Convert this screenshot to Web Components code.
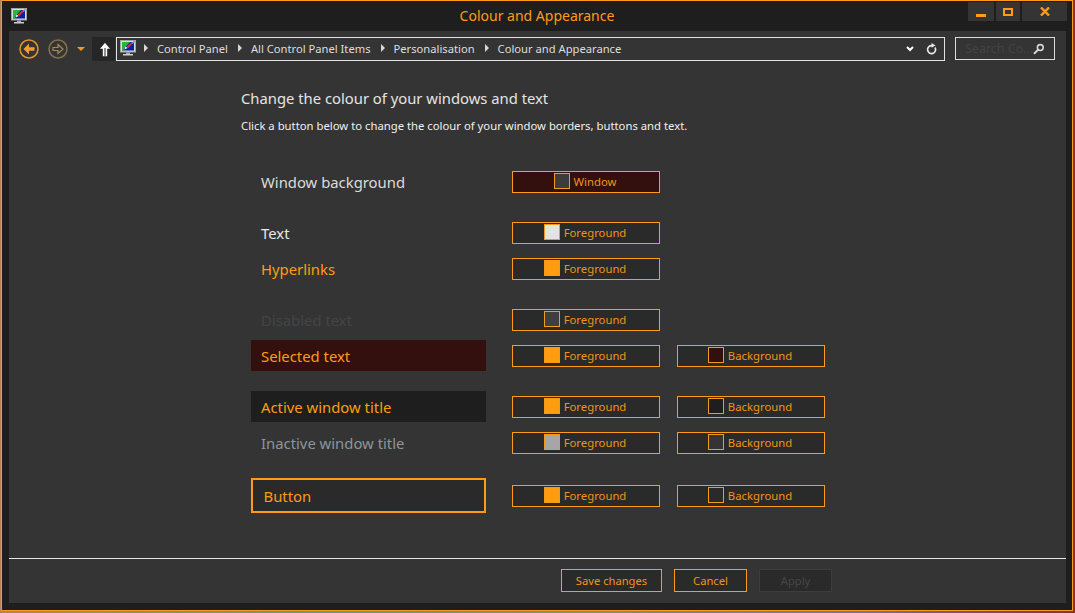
<!DOCTYPE html>
<html lang="en">
<head>
<meta charset="utf-8">
<title>Colour and Appearance</title>
<style>
  html, body { margin: 0; height: 100%; background: #7d2a3a; overflow: hidden; }
  body { font-family: "Noto Sans", "Open Sans", sans-serif; }
</style>
</head>
<body>
<cp-window>
  <cp-titlebar slot="title" caption="Colour and Appearance"></cp-titlebar>
  <cp-toolbar slot="toolbar"></cp-toolbar>
  <cp-heading heading="Change the colour of your windows and text"
    sub="Click a button below to change the colour of your window borders, buttons and text."></cp-heading>
  <appearance-list>
    <appearance-row label="Window background" kind="plain" fg="window"></appearance-row>
    <appearance-row class="gap" label="Text" fg="#e3e3e3" tint="#e8e8e8"></appearance-row>
    <appearance-row label="Hyperlinks" fg="#ff9c10" tint="#ff9c10"></appearance-row>
    <appearance-row class="gap" label="Disabled text" fg="#3f3f3f" tint="#424547"></appearance-row>
    <appearance-row label="Selected text" fg="#ff9c10" bg="#33100e" tint="#ff9c10" band="#33100e"></appearance-row>
    <appearance-row class="gap" label="Active window title" fg="#ff9c10" bg="#1e1e1e" tint="#ff9c10" band="#1e1e1e"></appearance-row>
    <appearance-row label="Inactive window title" fg="#a6a6a6" bg="#343434" tint="#8d949b"></appearance-row>
    <appearance-row class="gap" label="Button" fg="#ff9c10" bg="#2a2a2a" tint="#ff9c10" band="#2a2a2a" boxed></appearance-row>
  </appearance-list>
  <cp-footer slot="footer">
    <dlg-button style="width:101px">Save changes</dlg-button>
    <dlg-button style="width:73px">Cancel</dlg-button>
    <dlg-button style="width:73px" disabled>Apply</dlg-button>
  </cp-footer>
</cp-window>

<script>
const MONITOR = `
  <svg width="16" height="16" viewBox="0 0 16 16" aria-hidden="true">
    <rect x=".5" y=".5" width="15" height="11.5" fill="#dcdcdc" stroke="#a2a2a2"/>
    <rect x="2" y="2" width="12" height="8.5" fill="#0a1ea8"/>
    <path d="M2 2h8L5 7.5 3.5 10.5H2z" fill="#2bb53a"/>
    <path d="M4.5 9.5l1-3 2 1.5z" fill="#fff"/>
    <path d="M6.5 6.5L12 2l1 1-5 5.5z" fill="#d8312c"/>
    <path d="M11.5 3L14 .8l1 1-2.5 2.5z" fill="#5a8fe0"/>
    <rect x="6" y="12.5" width="4" height="1.5" fill="#a9a9a9"/>
    <rect x="3" y="14" width="10" height="1.5" fill="#cfcfcf"/>
  </svg>`;

class CpWindow extends HTMLElement {
  constructor() {
    super();
    this.attachShadow({ mode: 'open' }).innerHTML = `
      <style>
        :host { display: block; width: 1075px; height: 613px; box-sizing: border-box; padding: 0 2px 2px 1px;
          background: linear-gradient(90deg, #b9834f, #5d9a86 30%, #8a8a70 55%, #7a6fae 80%, #8a2c3e); }
        .frame { height: 100%; box-sizing: border-box; border: 1px solid #ff9a1a; background: #1e1e1e;
          display: flex; flex-direction: column; }
        .client { flex: 1; margin: 0 6px 7px 7px; background: #343434; display: flex; flex-direction: column; min-height: 0; }
        .body { flex: 1; min-height: 0; padding: 0 0 0 232px; }
      </style>
      <div class="frame">
        <slot name="title"></slot>
        <div class="client">
          <slot name="toolbar"></slot>
          <div class="body"><slot></slot></div>
          <slot name="footer"></slot>
        </div>
      </div>`;
  }
}

class CpTitlebar extends HTMLElement {
  constructor() {
    super();
    this.attachShadow({ mode: 'open' }).innerHTML = `
      <style>
        :host { display: flex; height: 30px; position: relative; color: #ff9a1a; }
        .icon { margin: 6px 0 0 9px; height: 16px; }
        .cap { position: absolute; left: 0; right: 0; top: 5px; text-align: center; font-size: 14px; line-height: 20px; }
        .ctl { margin-left: auto; margin-right: 5px; display: flex; gap: 2px; height: 19px; margin-top: 1px; position: relative; }
        .ctl span { background: #343434; display: flex; align-items: center; justify-content: center; }
        .ctl svg { display: block; }
      </style>
      <div class="icon">${MONITOR}</div>
      <div class="cap">${this.getAttribute('caption')}</div>
      <div class="ctl">
        <span style="width:26px"><svg width="10" height="3" style="margin-top:7px"><rect width="10" height="3" fill="#ff9a1a"/></svg></span>
        <span style="width:24px"><svg width="10" height="8"><rect x="1" y="1" width="8" height="6" fill="none" stroke="#ff9a1a" stroke-width="2"/></svg></span>
        <span style="width:45px"><svg width="10" height="9"><path d="M1 .5l8 8M9 .5l-8 8" stroke="#ff9a1a" stroke-width="2.4"/></svg></span>
      </div>`;
  }
}

class CpToolbar extends HTMLElement {
  constructor() {
    super();
    const crumbs = ['Control Panel', 'All Control Panel Items', 'Personalisation', 'Colour and Appearance'];
    this.attachShadow({ mode: 'open' }).innerHTML = `
      <style>
        :host { display: flex; align-items: flex-start; padding: 6px 0 0 10px; height: 30px; box-sizing: border-box; flex: none; }
        svg { display: block; }
        .nav { display: flex; align-items: center; height: 24px; gap: 9px; }
        .up { width: 23px; height: 24px; box-sizing: border-box; padding-left: 2px; margin-left: 7px; margin-right: 1px; background: #262626; display: flex; align-items: center; justify-content: center; }
        .addr { width: 829px; height: 24px; box-sizing: border-box; border: 1px solid #e2e2e2; display: flex; align-items: center; padding: 0 0 2px 3px; color: #dedede; font-size: 11.2px; }
        .addr .mon { margin-right: 8px; }
        .crumb { display: flex; align-items: center; }
        .crumb i { width: 0; height: 0; border-left: 4px solid #d8d8d8; border-top: 4px solid transparent; border-bottom: 4px solid transparent; margin-right: 9px; }
        .crumb + .crumb { margin-left: 10px; }
        .tail { margin-left: auto; margin-top: 2px; display: flex; align-items: center; gap: 12px; padding-right: 7px; }
        .search { width: 100px; height: 23px; box-sizing: border-box; border: 1px solid #dcdcdc; margin-left: 10px; display: flex; align-items: center; padding: 0 9px 0 9px; font-size: 12.5px; color: #434343; justify-content: space-between; white-space: nowrap; }
      </style>
      <div class="nav">
        <svg width="20" height="20" viewBox="0 0 20 20"><circle cx="10" cy="10" r="9" fill="none" stroke="#e0962a" stroke-width="1.5"/><path d="M10 4.5L4.5 10l5.5 5.5v-3.7h5.5V8.2H10z" fill="#f0a030"/></svg>
        <svg width="20" height="20" viewBox="0 0 20 20"><circle cx="10" cy="10" r="9" fill="none" stroke="#85714f" stroke-width="1.5"/><path d="M10 5.5L15 10l-5 4.5v-3H5v-3h5z" fill="none" stroke="#a88a55" stroke-width="1.2"/></svg>
        <svg width="8" height="4" viewBox="0 0 8 4"><path d="M0 0h8L4 4z" fill="#f09a20"/></svg>
      </div>
      <div class="up">
        <svg width="12" height="15" viewBox="0 0 12 15"><path d="M6 .5L11.5 7H8.5v7.5h-5V7H.5z" fill="#fff" stroke="#111" stroke-width=".5"/><path d="M6 6v8" stroke="#777" stroke-width="1.6"/></svg>
      </div>
      <div class="addr">
        <div class="mon">${MONITOR}</div>
        ${crumbs.map(c => `<span class="crumb"><i></i>${c}</span>`).join('')}
        <div class="tail">
          <svg width="8" height="6" viewBox="0 0 8 6"><path d="M1 1l3 3 3-3" fill="none" stroke="#fff" stroke-width="2"/></svg>
          <svg width="11" height="12" viewBox="0 0 11 12"><path d="M9 4.5A4 4 0 1 1 6 2.6" fill="none" stroke="#e8e8e8" stroke-width="1.7"/><path d="M5.5 0l4 2.6-4 2.2z" fill="#e8e8e8"/></svg>
        </div>
      </div>
      <div class="search">
        <span>Search Co...</span>
        <svg width="12" height="12" viewBox="0 0 12 12"><circle cx="7.5" cy="4.5" r="3" fill="none" stroke="#d8d8d8" stroke-width="1.6"/><path d="M5.2 6.8L1 11" stroke="#d8d8d8" stroke-width="2"/></svg>
      </div>`;
  }
}

class CpHeading extends HTMLElement {
  constructor() {
    super();
    this.attachShadow({ mode: 'open' }).innerHTML = `
      <style>
        :host { display: block; padding-top: 27px; color: #e4e4e4; }
        h1 { margin: 0; font-size: 14.8px; font-weight: 400; line-height: 20px; }
        p { margin: 10px 0 0; font-size: 11.3px; line-height: 16px; color: #f0f0f0; }
      </style>
      <h1>${this.getAttribute('heading')}</h1>
      <p>${this.getAttribute('sub')}</p>`;
  }
}

class AppearanceList extends HTMLElement {
  constructor() {
    super();
    this.attachShadow({ mode: 'open' }).innerHTML = `
      <style>:host { display: flex; flex-direction: column; gap: 5px; padding: 32px 0 0 10px; }</style>
      <slot></slot>`;
  }
}

class AppearanceRow extends HTMLElement {
  constructor() {
    super();
    const fg = this.getAttribute('fg'), bg = this.getAttribute('bg');
    const band = this.getAttribute('band') || 'transparent';
    const boxed = this.hasAttribute('boxed');
    const main = fg === 'window'
      ? `<color-button swatch="#3c3c3c" fill="#33100e">Window</color-button>`
      : `<color-button swatch="${fg}">Foreground</color-button>`;
    this.attachShadow({ mode: 'open' }).innerHTML = `
      <style>
        :host { display: flex; align-items: center; height: ${boxed ? 35 : 31}px; }
        :host(.gap) { margin-top: 15px; }
        .label { width: 235px; height: 100%; box-sizing: border-box; background: ${band};
          ${boxed ? 'border: 2px solid #ff9a1a; padding-left: 10.5px;' : 'padding-left: 10px;'}
          display: flex; align-items: center; font-size: 14.85px; color: ${this.getAttribute('tint') || '#dcdcdc'}; }
        .btns { display: flex; gap: 17px; margin-left: 26px; }
      </style>
      <div class="label">${this.getAttribute('label')}</div>
      <div class="btns">
        ${main}
        ${bg ? `<color-button swatch="${bg}">Background</color-button>` : ''}
      </div>`;
  }
}

class ColorButton extends HTMLElement {
  constructor() {
    super();
    const swatch = this.getAttribute('swatch');
    this.attachShadow({ mode: 'open' }).innerHTML = `
      <style>
        :host { display: flex; width: 148px; height: 22px; box-sizing: border-box; border: 1px solid #ff9a1a;
          background: ${this.getAttribute('fill') || '#2a2a2a'}; align-items: center; justify-content: center; gap: 4px;
          font-size: 11.3px; color: #f09418; padding-right: 2px; }
        i { width: 16px; height: 16px; margin-bottom: 2px; box-sizing: border-box; border: 1px solid #f09a20; background: ${swatch}; }
      </style>
      <i></i><span><slot></slot></span>`;
  }
}

class CpFooter extends HTMLElement {
  constructor() {
    super();
    this.attachShadow({ mode: 'open' }).innerHTML = `
      <style>
        :host { display: flex; flex: none; height: 45px; box-sizing: border-box; border-top: 1px solid #e6e6e6;
          padding: 10px 0 0 552px; gap: 12px; }
      </style>
      <slot></slot>`;
  }
}

class DlgButton extends HTMLElement {
  constructor() {
    super();
    this.attachShadow({ mode: 'open' }).innerHTML = `
      <style>
        :host { display: flex; height: 23px; box-sizing: border-box; border: 1px solid #ff9a1a; background: #2a2a2a;
          align-items: center; justify-content: center; font-size: 11.2px; color: #f09418; }
        :host([disabled]) { border-color: #3d3d3d; color: #464646; }
      </style>
      <slot></slot>`;
  }
}

customElements.define('cp-titlebar', CpTitlebar);
customElements.define('cp-toolbar', CpToolbar);
customElements.define('cp-heading', CpHeading);
customElements.define('color-button', ColorButton);
customElements.define('appearance-row', AppearanceRow);
customElements.define('appearance-list', AppearanceList);
customElements.define('dlg-button', DlgButton);
customElements.define('cp-footer', CpFooter);
customElements.define('cp-window', CpWindow);
</script>
</body>
</html>
